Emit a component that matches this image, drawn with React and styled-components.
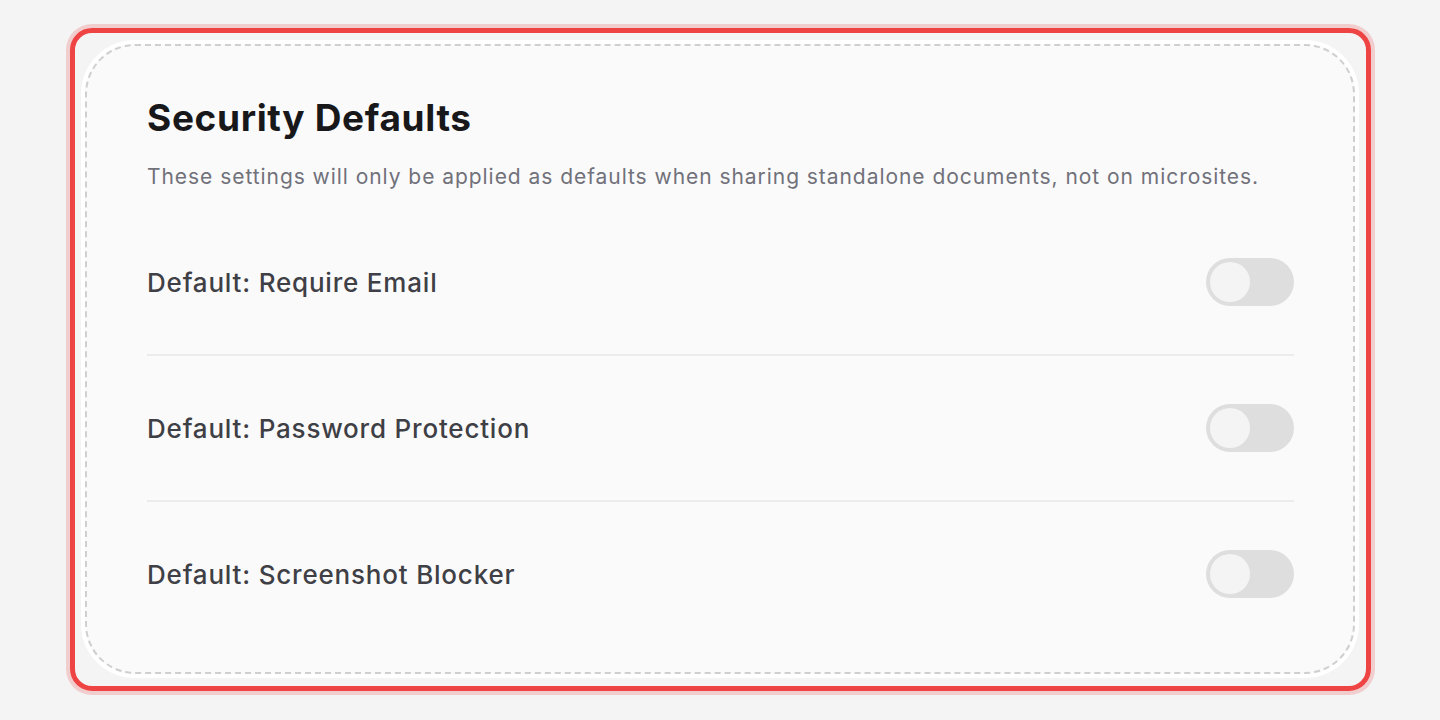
import React, { useState } from "react";
import styled, { createGlobalStyle } from "styled-components";

const GlobalStyle = createGlobalStyle`
  html, body {
    margin: 0;
    padding: 0;
    background: #f4f4f4;
    font-family: Inter, "Noto Sans", "Liberation Sans", sans-serif;
  }
`;

const settings = [
  { id: "email", label: "Default: Require Email" },
  { id: "password", label: "Default: Password Protection" },
  { id: "screenshot", label: "Default: Screenshot Blocker" },
];

function Toggle({ on, onChange }) {
  return (
    <Track type="button" $on={on} onClick={() => onChange(!on)} aria-pressed={on}>
      <Knob />
    </Track>
  );
}

function App() {
  const [values, setValues] = useState({
    email: false,
    password: false,
    screenshot: false,
  });

  return (
    <>
      <GlobalStyle />
      <Page>
        <Frame>
          <Card>
            <Title>Security Defaults</Title>
            <Subtitle>
              These settings will only be applied as defaults when sharing
              standalone documents, not on microsites.
            </Subtitle>
            <List>
              {settings.map((s) => (
                <Row key={s.id}>
                  <Label>{s.label}</Label>
                  <Toggle
                    on={values[s.id]}
                    onChange={(v) => setValues({ ...values, [s.id]: v })}
                  />
                </Row>
              ))}
            </List>
          </Card>
        </Frame>
      </Page>
    </>
  );
}

const Page = styled.div`
  width: 1440px;
  height: 720px;
  box-sizing: border-box;
  padding: 28px 69px 29px 70px;
`;

const Frame = styled.div`
  box-sizing: border-box;
  height: 100%;
  padding: 11px 11px 12px 10px;
  border: 5px solid #ef4444;
  border-radius: 22px;
  box-shadow: 0 0 0 4px rgba(239, 68, 68, 0.22);
`;

/* white ring drawn as a spread shadow around the dashed card */
const Card = styled.div`
  box-sizing: border-box;
  height: 100%;
  padding: 50px 59px 0 60px;
  background: #fafafa;
  border: 2px dashed #cfcfcf;
  border-radius: 50px;
  box-shadow: 0 0 0 4px #ffffff;
`;

const Title = styled.h2`
  margin: 0;
  font-size: 37px;
  line-height: 44px;
  font-weight: 700;
  letter-spacing: 0.65px;
  color: #18181b;
`;

const Subtitle = styled.p`
  margin: 23px 0 0;
  font-size: 21px;
  line-height: 28px;
  letter-spacing: 0.95px;
  color: #71717a;
`;

const List = styled.div`
  margin-top: 19px;
  display: flex;
  flex-direction: column;
`;

const Row = styled.div`
  display: flex;
  align-items: center;
  justify-content: space-between;
  height: 144px;
  border-bottom: 2px solid #ececec;

  &:last-child {
    border-bottom: none;
  }
`;

const Label = styled.span`
  font-size: 26px;
  font-weight: 500;
  letter-spacing: 0.8px;
  color: #3f3f46;
`;

const Track = styled.button`
  width: 88px;
  height: 48px;
  padding: 4px;
  border: none;
  border-radius: 24px;
  background: ${(p) => (p.$on ? "#ef4444" : "#dedede")};
  display: flex;
  justify-content: ${(p) => (p.$on ? "flex-end" : "flex-start")};
  cursor: pointer;
  box-sizing: border-box;
`;

const Knob = styled.span`
  width: 40px;
  height: 40px;
  border-radius: 50%;
  background: #f4f4f4;
`;

export default App;
